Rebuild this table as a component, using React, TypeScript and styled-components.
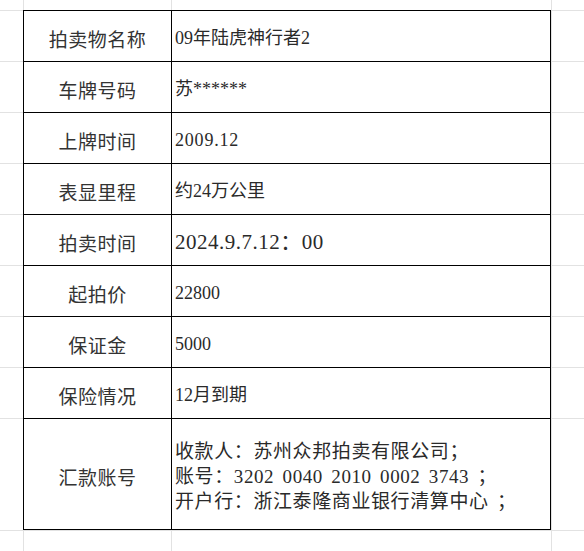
import styled, { createGlobalStyle } from "styled-components";

const GlobalStyle = createGlobalStyle`
  html, body {
    margin: 0;
    padding: 0;
    background: #ffffff;
  }
  body {
    font-family: "Noto Sans CJK SC", sans-serif;
  }
  * {
    box-sizing: border-box;
  }
`;

const Sheet = styled.div`
  width: 584px;
  height: 551px;
  overflow: hidden;
  display: grid;
  grid-template-columns: 23px 148px 380px 1fr;
  grid-template-rows: 10px repeat(8, 51px) 112px 1fr;
  background: #ffffff;
`;

interface GridCellProps {
  $left: boolean;
  $top: boolean;
}

const GridCell = styled.div<GridCellProps>`
  border-left: ${(p) => (p.$left ? "1px solid #e2e2e2" : "none")};
  border-top: ${(p) => (p.$top ? "1px solid #e2e2e2" : "none")};
`;

const Table = styled.div`
  grid-column: 2 / 4;
  grid-row: 2 / 11;
  display: grid;
  grid-template-columns: 148px 1fr;
  grid-template-rows: repeat(8, 51px) 1fr;
  border-left: 1px solid #000000;
  border-top: 1px solid #000000;
`;

const LabelCell = styled.div`
  display: flex;
  align-items: center;
  justify-content: center;
  padding-top: 4px;
  border-right: 1px solid #000000;
  border-bottom: 1px solid #000000;
  color: #333333;
  font-family: "Noto Sans CJK SC", sans-serif;
  font-size: 19px;
  letter-spacing: 0.5px;
`;

interface ValueCellProps {
  $size?: number;
  $spacing?: number;
}

const ValueCell = styled.div<ValueCellProps>`
  display: flex;
  flex-direction: column;
  justify-content: center;
  padding: 4px 0 0 3px;
  border-right: 1px solid #000000;
  border-bottom: 1px solid #000000;
  color: #2a2a2a;
  font-family: "Liberation Serif", "Noto Sans CJK SC", serif;
  font-size: ${(p) => p.$size ?? 18}px;
  letter-spacing: ${(p) => p.$spacing ?? 0}px;
  word-spacing: 3px;
  line-height: 25px;
  white-space: pre;
`;

const rows: { label: string; value: string[]; size?: number; spacing?: number }[] = [
  { label: "拍卖物名称", value: ["09年陆虎神行者2"] },
  { label: "车牌号码", value: ["苏******"] },
  { label: "上牌时间", value: ["2009.12"], spacing: 0.8 },
  { label: "表显里程", value: ["约24万公里"] },
  { label: "拍卖时间", value: ["2024.9.7.12：00"], size: 21, spacing: 0.5 },
  { label: "起拍价", value: ["22800"] },
  { label: "保证金", value: ["5000"] },
  { label: "保险情况", value: ["12月到期"] },
  {
    label: "汇款账号",
    value: [
      "收款人：苏州众邦拍卖有限公司；",
      "账号：3202 0040 2010 0002 3743 ；",
      "开户行：浙江泰隆商业银行清算中心 ；",
    ],
    size: 19,
    spacing: 0.6,
  },
];

// background spreadsheet cells around the table, in auto-placement order
const backgroundCells: { row: number; col: number }[] = [];
for (let r = 0; r <= 10; r++) {
  const cols = r === 0 || r === 10 ? [0, 1, 2, 3] : [0, 3];
  cols.forEach((c) => backgroundCells.push({ row: r, col: c }));
}

const App = () => {
  return (
    <>
      <GlobalStyle />
      <Sheet>
        <Table>
          {rows.flatMap((row) => [
            <LabelCell key={row.label + "-l"}>{row.label}</LabelCell>,
            <ValueCell key={row.label + "-v"} $size={row.size} $spacing={row.spacing}>
              {row.value.map((line) => (
                <div key={line}>{line}</div>
              ))}
            </ValueCell>,
          ])}
        </Table>
        {backgroundCells.map((cell) => (
          <GridCell
            key={`${cell.row}-${cell.col}`}
            $left={cell.col > 0}
            $top={cell.row > 0}
          />
        ))}
      </Sheet>
    </>
  );
};

export default App;
